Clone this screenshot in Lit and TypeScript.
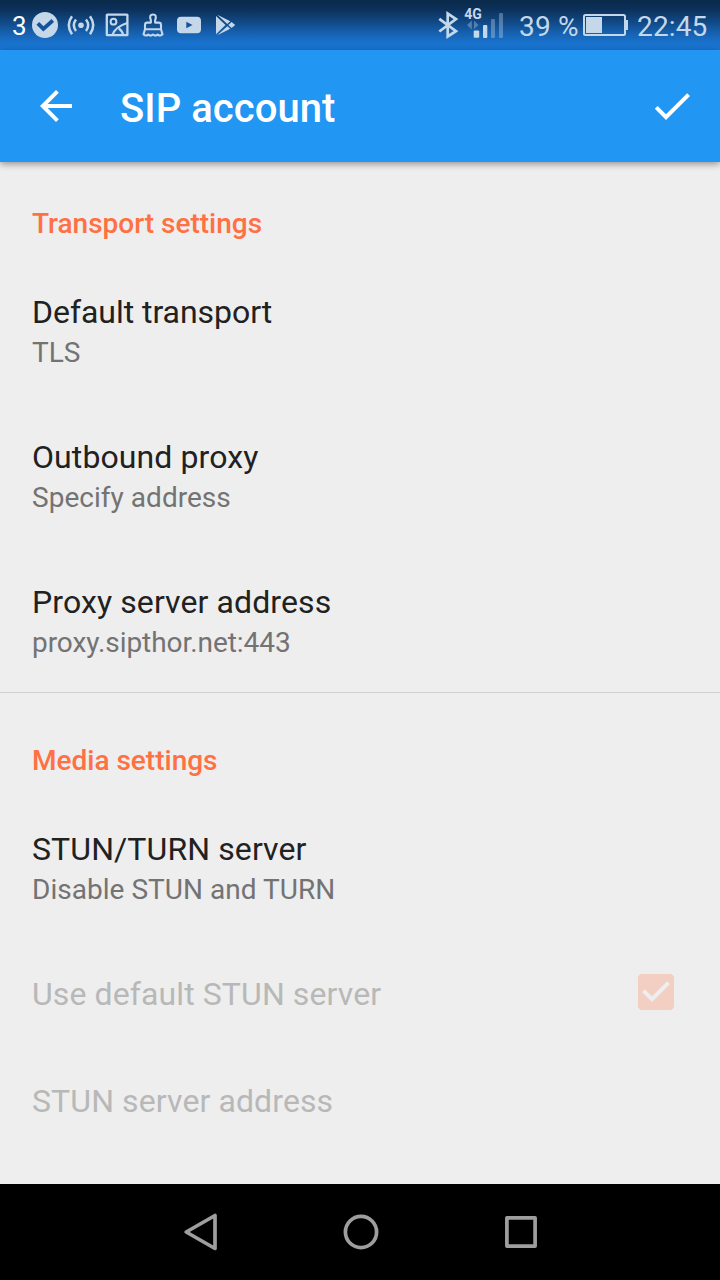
import { LitElement, html, css, nothing } from "lit";
import { customElement, property } from "lit/decorators.js";

@customElement("status-bar")
class StatusBar extends LitElement {
  static styles = css`
    :host {
      display: block;
      height: 50px;
      background: linear-gradient(#0a2a4a 0%, #0c3058 18%, #114a87 45%, #1661b0 66%, #1973cd 86%, #1976d2 100%);
      color: #c5d8ea;
      font-size: 28px;
      line-height: 50px;
    }
    .bar { display: flex; height: 50px; padding: 0 12px; white-space: nowrap; }
    .count { width: 18px; color: #fff; font-size: 26px; padding-top: 1px; }
    svg { display: block; flex: none; }
    .space { flex: 1; }
    .net { font: 700 14px/14px Roboto, sans-serif; fill: #c5d8ea; }
    .pct { width: 62px; padding-top: 2px; margin-left: 14px; letter-spacing: 0.2px; }
    .time { width: 71px; padding-top: 2px; margin-left: 8px; letter-spacing: 0.15px; }
  `;
  render() {
    return html`<div class="bar">
      <span class="count">3</span>
      <svg width="210" height="50" viewBox="30 0 210 50" fill="none" stroke="#c5d8ea" stroke-width="2.4">
        <circle cx="45" cy="25" r="13" fill="#c5d8ea" stroke="none" />
        <path d="M37.800 23.300l5.600 5.600 9.400-8.400" stroke="#14529b" stroke-width="3.800" />
        <circle cx="81" cy="25.200" r="2.800" fill="#c5d8ea" stroke="none" />
        <path d="M76 19.500q-4.400 5.700 0 11.400M86 19.500q4.400 5.700 0 11.400M72 16.200q-6.500 9 0 18M90 16.200q6.500 9 0 18" stroke-width="2.500" />
        <rect x="106.800" y="14.600" width="20.600" height="20.600" rx=".5" stroke-width="2.300" />
        <circle cx="113.500" cy="21.700" r="2.900" stroke-width="2" />
        <path d="M112.300 35.500q2.200-8.500 15-12.500M118.800 28.500q3.200 2 4.400 6.500" stroke-width="2.200" />
        <path d="M150.900 22.600v-2.300q-2.200-5.800 2.100-5.800t2.100 5.800v2.300h3.600q2.300 0 2.300 2.300v4.300l1.500 5q-2.300 2.400-4.700 .4-2.400 2.200-4.800 0-2.400 2.200-4.800 0-2.400 2-4.700-.4l1.500-5v-4.300q0-2.300 2.300-2.300zM145.300 29.300h15.400" stroke-width="2.100" stroke-linejoin="round" />
        <rect x="177" y="16.700" width="24" height="16.600" rx="4" fill="#c5d8ea" stroke="none" />
        <path d="M186.300 21.700v6.600l6.200-3.300z" fill="#14529b" stroke="none" />
        <path d="M216 16v18.300l9.500-9.200zM217.300 14.800l13 6.500-3 2.600zM217.300 35.200l13-6.400-3-2.600zM228.300 25l3.300-3 3.600 3-3.600 3z" fill="#c5d8ea" stroke="none" />
      </svg>
      <span class="space"></span>
      <svg width="68" height="50" viewBox="437 0 68 50" fill="#c5d8ea">
        <path d="M439.300 18.800l16.700 12.400-8.300 5.300V13.500l8.300 5.500-16.700 12.500" fill="none" stroke="#c5d8ea" stroke-width="2.700" />
        <text class="net" x="464.300" y="19">4G</text>
        <path d="M467 25l4.800-4.500v9zM474 20.500l4.500 4.500-4.500 4z" opacity=".36" />
        <rect x="473.700" y="30.500" width="5.500" height="7.300" rx="1" />
        <rect x="483" y="25" width="4.300" height="13" rx="1" />
        <rect x="491" y="19" width="4" height="19" rx="1" opacity=".36" />
        <rect x="499" y="13" width="4" height="25" rx="1" opacity=".36" />
      </svg>
      <span class="pct">39 %</span>
      <svg width="48" height="50" viewBox="581 0 48 50">
        <rect x="584" y="15" width="41" height="20" rx="1.500" fill="none" stroke="#c5d8ea" stroke-width="2" />
        <rect x="586" y="17" width="16" height="16" fill="#c5d8ea" />
        <path d="M626 20h2v10h-2z" fill="#c5d8ea" />
      </svg>
      <span class="time">22:45</span>
    </div>`;
  }
}

@customElement("app-toolbar")
class AppToolbar extends LitElement {
  static styles = css`
    :host { display: block; position: relative; z-index: 1; }
    .bar {
      display: flex;
      height: 112px;
      background: #2196f3;
      box-shadow: 0 2px 7px rgba(0, 0, 0, 0.4);
      color: #fff;
    }
    svg { display: block; flex: none; margin-top: 32px; }
    .back { margin-left: 32px; }
    .done { margin-right: 24px; }
    h1 { flex: 1; margin: 0 0 0 40px; padding-top: 35px; font-size: 40px; line-height: 48px; font-weight: 500; letter-spacing: 0.05px; }
  `;
  render() {
    return html`<div class="bar">
      <svg class="back" width="48" height="48" viewBox="0 0 24 24" fill="#fff">
        <path d="M20 11H7.830l5.590-5.590L12 4l-8 8 8 8 1.410-1.410L7.830 13H20v-2z" />
      </svg>
      <h1>SIP account</h1>
      <svg class="done" width="48" height="48" viewBox="0 0 24 24" fill="#fff">
        <path d="M9 16.170L4.830 12l-1.420 1.410L9 19 21 7l-1.410-1.410z" />
      </svg>
    </div>`;
  }
}

@customElement("pref-row")
class PrefRow extends LitElement {
  @property() label = "";
  @property() summary = "";
  @property({ type: Boolean, reflect: true }) disabled = false;
  @property({ type: Boolean }) checkbox = false;

  static styles = css`
    :host { display: flex; height: 145px; padding: 32px 40px 0 32px; box-sizing: border-box; letter-spacing: 0.1px; }
    :host([disabled]) { height: 107px; }
    .text { flex: 1; white-space: nowrap; }
    .label { color: #212121; font-size: 32px; line-height: 38px; }
    .summary { color: #737373; font-size: 28px; line-height: 32px; padding-top: 6px; letter-spacing: var(--summary-spacing, 0.03px); }
    :host([disabled]) .label { color: #b8b8b8; }
    svg { display: block; margin-top: -7px; }
  `;
  render() {
    return html`<div class="text">
        <div class="label">${this.label}</div>
        ${this.summary ? html`<div class="summary">${this.summary}</div>` : nothing}
      </div>
      ${this.checkbox
        ? html`<svg width="48" height="48" viewBox="0 0 24 24" fill="#f2cec3">
            <path d="M19 3H5c-1.110 0-2 .9-2 2v14c0 1.100.890 2 2 2h14c1.110 0 2-.9 2-2V5c0-1.100-.890-2-2-2zm-9 14l-5-5 1.410-1.410L10 14.170l7.590-7.590L19 8l-9 9z" />
          </svg>`
        : nothing}`;
  }
}

@customElement("nav-bar")
class NavBar extends LitElement {
  static styles = css`
    :host { display: block; height: 96px; background: #000; }
    svg { display: block; }
  `;
  render() {
    return html`<svg width="720" height="96" viewBox="0 1184 720 96" fill="none" stroke="#9e9e9e" stroke-width="3.700" stroke-linejoin="round">
      <path d="M215 1215.500v33l-28.800-16.500z" />
      <circle cx="361" cy="1232" r="15.600" />
      <rect x="506.900" y="1217.900" width="28.200" height="28.200" />
    </svg>`;
  }
}

@customElement("app-root")
class AppRoot extends LitElement {
  static styles = css`
    :host {
      display: flex;
      flex-direction: column;
      width: 720px;
      height: 1280px;
      overflow: hidden;
      background: #eee;
      font-family: Roboto, sans-serif;
    }
    status-bar, app-toolbar, nav-bar { flex: none; }
    main { flex: 1; min-height: 0; overflow: hidden; }
    section + section { border-top: 1px solid #d0d0d0; padding-top: 6px; }
    section:first-child { height: 530px; }
    .tight { letter-spacing: -0.04px; }
    .address { --summary-spacing: -0.06px; }
    h2 {
      margin: 0;
      padding: 46px 32px 21px;
      color: #ff7043;
      font-size: 28px;
      line-height: 32px;
      font-weight: 500;
    }
  `;
  render() {
    return html`
      <status-bar></status-bar>
      <app-toolbar></app-toolbar>
      <main>
        <section>
          <h2>Transport settings</h2>
          <pref-row class="tight" label="Default transport" summary="TLS"></pref-row>
          <pref-row label="Outbound proxy" summary="Specify address"></pref-row>
          <pref-row class="address" label="Proxy server address" summary="proxy.sipthor.net:443"></pref-row>
        </section>
        <section>
          <h2>Media settings</h2>
          <pref-row label="STUN/TURN server" summary="Disable STUN and TURN"></pref-row>
          <pref-row label="Use default STUN server" disabled checkbox></pref-row>
          <pref-row label="STUN server address" disabled></pref-row>
        </section>
      </main>
      <nav-bar></nav-bar>
    `;
  }
}
